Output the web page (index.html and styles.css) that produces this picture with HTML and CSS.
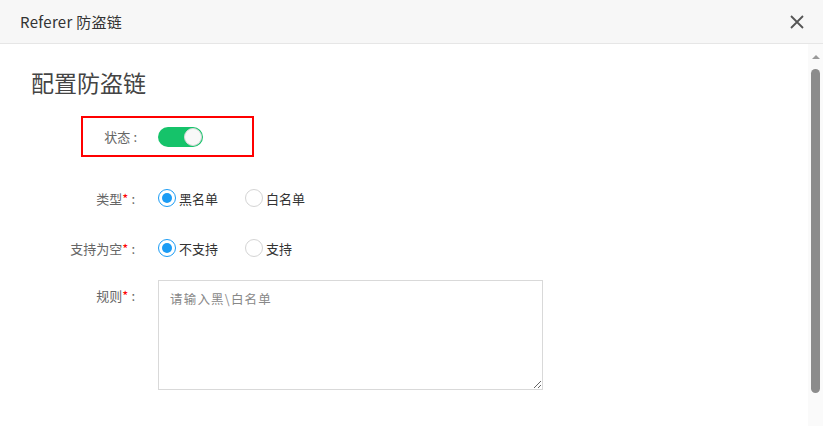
FILE: index.html
```html
<!DOCTYPE html>
<html lang="zh-CN">
<head>
<meta charset="utf-8">
<title>Referer 防盗链</title>
<link rel="stylesheet" href="styles.css">
</head>
<body>
<div class="dialog">
  <div class="dlg-header">
    <span class="dlg-title">Referer 防盗链</span>
    <svg class="close" width="14" height="14" viewBox="0 0 14 14"><path d="M1 1 L13 13 M13 1 L1 13" stroke="#555" stroke-width="1.8" fill="none"/></svg>
  </div>
  <div class="dlg-body">
    <div class="content">
      <h2 class="heading">配置防盗链</h2>
      <div class="row row-status highlight">
        <label class="lbl"><span>状态<span class="colon">:</span></span></label>
        <div class="switch on"><span class="knob"></span></div>
      </div>
      <div class="row row-type">
        <label class="lbl"><span>类型<span class="req">*</span><span class="colon">:</span></span></label>
        <div class="radios">
          <span class="radio checked"><span class="dot"></span></span><span class="opt">黑名单</span>
          <span class="radio"></span><span class="opt">白名单</span>
        </div>
      </div>
      <div class="row row-empty">
        <label class="lbl"><span>支持为空<span class="req">*</span><span class="colon">:</span></span></label>
        <div class="radios">
          <span class="radio checked"><span class="dot"></span></span><span class="opt">不支持</span>
          <span class="radio"></span><span class="opt">支持</span>
        </div>
      </div>
      <div class="row row-rule">
        <label class="lbl lbl-top"><span>规则<span class="req">*</span><span class="colon">:</span></span></label>
        <textarea class="rules" placeholder="请输入黑\白名单"></textarea>
      </div>
    </div>
    <div class="scrollbar">
      <span class="arrow-up"></span>
      <span class="thumb"></span>
    </div>
  </div>
</div>
</body>
</html>
```
FILE: styles.css
```css
* { box-sizing: border-box; }
html, body { margin: 0; padding: 0; background: #fff; }
body {
  font-family: "Noto Sans CJK SC", "Noto Sans", sans-serif;
  width: 823px;
  height: 426px;
  overflow: hidden;
}
.dialog { display: flex; flex-direction: column; height: 426px; }
.dlg-header {
  height: 44px;
  flex: none;
  background: #f7f7f7;
  border-bottom: 1px solid #e6e6e6;
  display: flex;
  align-items: center;
  justify-content: space-between;
  padding: 0 19px 0 20px;
}
.dlg-title { font-size: 15px; color: #333; letter-spacing: 0.3px; }
.close { display: block; }
.dlg-body { flex: 1; display: flex; min-height: 0; }
.content { flex: 1; padding-left: 31px; }
.heading {
  margin: 23px 0 19px;
  font-size: 23px;
  line-height: 30px;
  font-weight: 400;
  color: #444;
}
.row {
  display: flex;
  align-items: center;
  width: 173px;
  margin-left: 50px;
  border: 2px solid transparent;
}
.highlight { border-color: #f00; height: 41px; }
.row-type { height: 40px; margin-top: 21px; width: 500px; }
.row-empty { height: 40px; margin-top: 10px; width: 500px; }
.row-rule { align-items: flex-start; margin-top: 10px; width: 500px; }
.lbl {
  width: 52px;
  flex: none;
  display: flex;
  justify-content: flex-end;
  font-size: 13px;
  color: #666;
  margin-right: 23px;
  white-space: nowrap;
}
.row-status .lbl { width: 54px; margin-right: 21px; }
.lbl > span { flex: none; }
.colon { margin-left: 3px; }
.lbl-top { margin-top: 6px; }
.req { color: #f00; }
.switch {
  width: 45px;
  height: 20px;
  border-radius: 10px;
  background: #15c36a;
  position: relative;
}
.knob {
  position: absolute;
  right: 1px;
  top: 1px;
  width: 18px;
  height: 18px;
  border-radius: 50%;
  background: #f8f8f8;
  border: 1px solid #d8d8d8;
}
.radios { display: flex; align-items: center; }
.radio {
  width: 18px;
  height: 18px;
  border-radius: 50%;
  border: 1px solid #d4d4d4;
  background: #fff;
  display: flex;
  align-items: center;
  justify-content: center;
  flex: none;
}
.radio.checked { border: 1.5px solid #1a9cf5; }
.dot { width: 10px; height: 10px; border-radius: 50%; background: #1a9cf5; }
.opt { font-size: 13px; color: #333; margin-left: 3px; margin-right: 27px; }
.rules {
  width: 385px;
  height: 110px;
  border: 1px solid #d9d9d9;
  padding: 8px 11px;
  font-family: "Noto Sans CJK SC", sans-serif;
  font-size: 12.5px;
  letter-spacing: 1.2px;
  resize: both;
  outline: none;
  margin: 0;
}
.rules::placeholder { color: #888; }
.scrollbar {
  width: 15px;
  flex: none;
  background: #fafafa;
  position: relative;
  padding-top: 11px;
  display: flex;
  flex-direction: column;
  align-items: center;
}
.arrow-up {
  width: 0; height: 0;
  border-left: 4px solid transparent;
  border-right: 4px solid transparent;
  border-bottom: 4px solid #999;
}
.thumb {
  margin-top: 10px;
  width: 9px;
  height: 324px;
  border-radius: 5px;
  background: #8c8c8c;
}
```
